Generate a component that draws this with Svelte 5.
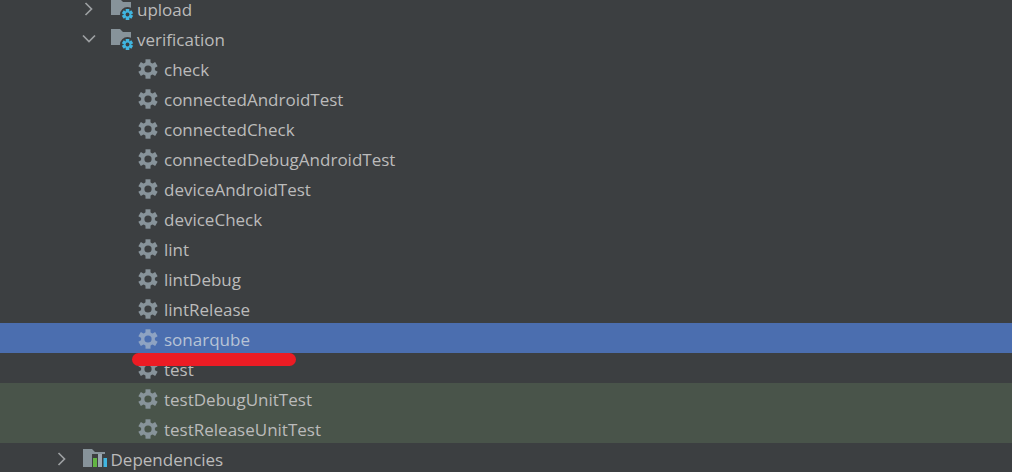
<script lang="ts">
  const tasks = [
    { name: 'check' },
    { name: 'connectedAndroidTest' },
    { name: 'connectedCheck' },
    { name: 'connectedDebugAndroidTest' },
    { name: 'deviceAndroidTest' },
    { name: 'deviceCheck' },
    { name: 'lint' },
    { name: 'lintDebug' },
    { name: 'lintRelease' },
    { name: 'sonarqube', selected: true },
    { name: 'test' },
    { name: 'testDebugUnitTest', tested: true },
    { name: 'testReleaseUnitTest', tested: true }
  ];
</script>

{#snippet chevron(open: boolean)}
  <svg class="chevron" viewBox="0 0 16 16" width="16" height="16">
    {#if open}
      <path d="M2 4.5l6 6 6-6" />
    {:else}
      <path d="M4.5 2l6 6-6 6" />
    {/if}
  </svg>
{/snippet}

{#snippet gear()}
  <svg class="gear" viewBox="0 0 20 20" width="20" height="20">
    <circle cx="10" cy="10" r="7" class="gear-body" />
    <rect x="7.5" y="0.3" width="5" height="19.4" class="gear-body" />
    <rect x="7.5" y="0.3" width="5" height="19.4" class="gear-body" transform="rotate(60 10 10)" />
    <rect x="7.5" y="0.3" width="5" height="19.4" class="gear-body" transform="rotate(120 10 10)" />
    <circle cx="10" cy="10" r="3.6" class="gear-hole" />
  </svg>
{/snippet}

{#snippet folderGear()}
  <svg class="folder" viewBox="0 0 24 24" width="24" height="24">
    <path class="folder-body" d="M1 3h9l3 3h8v13H1z" />
    <circle cx="17.5" cy="18.5" r="7.5" class="folder-cut" />
    <circle cx="17.5" cy="18.5" r="3" class="blue-ring" />
    <rect x="15.7" y="13" width="3.6" height="11" class="blue-tooth" />
    <rect x="15.7" y="13" width="3.6" height="11" class="blue-tooth" transform="rotate(60 17.5 18.5)" />
    <rect x="15.7" y="13" width="3.6" height="11" class="blue-tooth" transform="rotate(120 17.5 18.5)" />
    <circle cx="17.5" cy="18.5" r="1.9" class="folder-cut" />
  </svg>
{/snippet}

<div class="tree">
  <div class="row depth-folder">
    {@render chevron(false)}
    {@render folderGear()}
    <span class="label">upload</span>
  </div>
  <div class="row depth-folder">
    {@render chevron(true)}
    {@render folderGear()}
    <span class="label">verification</span>
  </div>

  {#each tasks as task}
    <div class="row depth-task" class:selected={task.selected} class:tested={task.tested}>
      {@render gear()}
      <span class="label">{task.name}</span>
      {#if task.selected}
        <span class="scribble"></span>
      {/if}
    </div>
  {/each}

  <div class="row depth-root">
    {@render chevron(false)}
    <svg class="folder" viewBox="0 0 24 24" width="24" height="24">
      <path class="folder-body" d="M0 3h9l3 3h10v2H9v13H0z" />
      <rect x="10" y="12" width="4" height="9" fill="#62b543" />
      <rect x="15" y="8" width="4" height="13" fill="#9aa7b0" />
      <rect x="20.5" y="12" width="3.5" height="9" fill="#40b6e0" />
    </svg>
    <span class="label">Dependencies</span>
  </div>
</div>

<style>
  :global(body) {
    margin: 0;
    background: #3c3f41;
    overflow: hidden;
  }

  .tree {
    margin-block-start: -7px;
    font-family: 'Open Sans', 'Noto Sans', sans-serif;
    font-size: 17px;
    color: #bbbbbb;
  }

  .row {
    position: relative;
    display: flex;
    align-items: center;
    box-sizing: border-box;
    block-size: 30px;
    padding-block-start: 2px;
    white-space: nowrap;
  }

  .label {
    line-height: 18px;
    padding-block-start: 2px;
  }

  .depth-root {
    padding-inline-start: 54px;
  }

  .depth-folder {
    padding-inline-start: 81px;
  }

  .depth-task {
    padding-inline-start: 138px;
  }

  .selected {
    background: #4b6eaf;
  }

  .tested {
    background: #49544a;
  }

  .chevron {
    flex: none;
    fill: none;
    stroke: #9da0a2;
    stroke-width: 1.7;
  }

  .depth-folder .folder,
  .depth-root .folder {
    margin-inline-start: 13px;
  }

  .folder {
    flex: none;
    margin-block-start: -2px;
  }

  .folder + .label {
    margin-inline-start: 3px;
  }

  .depth-root .label {
    margin-inline-start: 3.5px;
  }

  .folder-body {
    fill: #87939a;
  }

  .folder-cut {
    fill: #3c3f41;
  }

  .blue-ring,
  .blue-tooth {
    fill: #40b6e0;
  }

  .gear {
    flex: none;
    margin-block-start: -1px;
  }

  .gear-body {
    fill: #87939a;
  }

  .gear-hole {
    fill: #3c3f41;
  }

  .selected .gear-body {
    fill: #8ea3c2;
  }

  .selected .gear-hole {
    fill: #4b6eaf;
  }

  .tested .gear-hole {
    fill: #49544a;
  }

  .gear + .label {
    margin-inline-start: 6px;
  }

  .selected .label {
    color: #b7c3d6;
  }

  .scribble {
    position: absolute;
    inset-inline-start: 132px;
    inset-block-start: 30px;
    inline-size: 164px;
    block-size: 13px;
    border-radius: 7px;
    background: #ec1c24;
    z-index: 1;
  }
</style>
